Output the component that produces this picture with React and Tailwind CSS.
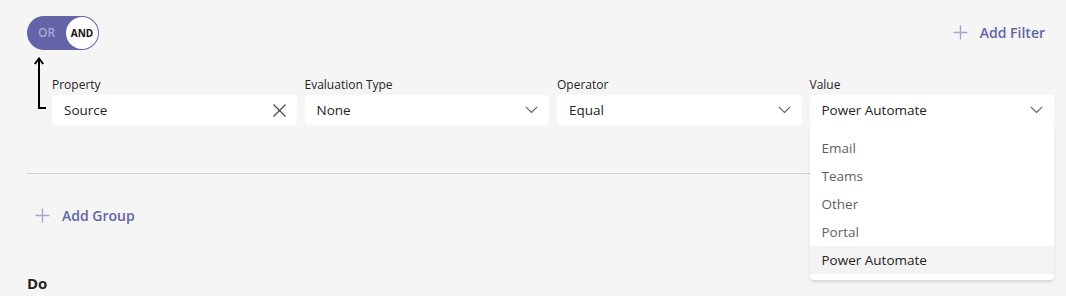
import { useState } from 'react';

const font = { fontFamily: '"Segoe UI", "Open Sans", "Noto Sans", sans-serif' };

function Chevron() {
  return (
    <svg width="13" height="8" viewBox="0 0 13 8" fill="none" className="text-[#605e5c]">
      <path d="M0.8 0.8 L6.5 6.5 L12.2 0.8" stroke="currentColor" strokeWidth="1.1" />
    </svg>
  );
}

function Plus() {
  return (
    <svg width="15" height="15" viewBox="0 0 15 15" fill="none">
      <path d="M7.5 0.5 V14.5 M0.5 7.5 H14.5" stroke="#a3a4cf" strokeWidth="1.4" />
    </svg>
  );
}

function Field({ label, value, icon, children }) {
  return (
    <div className="flex-1 relative">
      <div className="text-[12px] leading-[16px] text-[#252423] mb-[2px]">{label}</div>
      <div className="h-[30px] bg-white rounded-[4px] flex items-center justify-between pl-3 pr-[11px] text-[13.5px] text-[#252423]">
        <span>{value}</span>
        {icon}
      </div>
      {children}
    </div>
  );
}

export default function App() {
  const [options] = useState(['Email', 'Teams', 'Other', 'Portal', 'Power Automate']);

  return (
    <main className="w-[1066px] h-[296px] bg-[#f5f5f5] overflow-hidden relative" style={font}>
      {/* Toggle + add filter */}
      <div className="flex items-start justify-between pl-[27px] pr-[21px] pt-4">
        <div className="w-[72px] h-[34px] rounded-full bg-[#6264a7] flex items-center justify-between pl-[11px] pr-[1px]">
          <span className="text-[12px] font-semibold text-[#a7a8d6]">OR</span>
          <span className="w-[32px] h-[32px] rounded-full bg-white flex items-center justify-center text-[10px] font-bold text-[#111]">
            AND
          </span>
        </div>
        <button className="flex items-center gap-3 mt-[6px] text-[14px] font-semibold text-[#6264a7]">
          <Plus />
          Add Filter
        </button>
      </div>

      {/* Filter row */}
      <div className="flex items-start pl-[34px] pr-[12px] mt-[6px]">
        <svg width="18" height="54" viewBox="0 0 18 54" fill="none" className="shrink-0 mt-[1px]">
          <path d="M5 2 V51 H12" stroke="#000" strokeWidth="2" />
          <path d="M0.8 7 L5 1.5 L9.2 7" stroke="#000" strokeWidth="2" />
        </svg>
        <div className="flex gap-2 flex-1 mt-[21px]">
          <Field
            label="Property"
            value="Source"
            icon={
              <svg width="13" height="13" viewBox="0 0 13 13" fill="none">
                <path d="M0.5 0.5 L12.5 12.5 M12.5 0.5 L0.5 12.5" stroke="#444" strokeWidth="1.1" />
              </svg>
            }
          />
          <Field label="Evaluation Type" value="None" icon={<Chevron />} />
          <Field label="Operator" value="Equal" icon={<Chevron />} />
          <Field label="Value" value="Power Automate" icon={<Chevron />}>
            <div className="absolute left-0 right-0 top-[48px] bg-white rounded-b-[4px] shadow-[0_2px_3px_rgba(0,0,0,0.12)] pt-[9px] pb-[6px] z-10">
              {options.map((o) => (
                <div
                  key={o}
                  className={
                    o === 'Power Automate'
                      ? 'h-[28px] flex items-center px-3 text-[13.5px] text-[#252423] bg-[#f3f3f3]'
                      : 'h-[28px] flex items-center px-3 text-[13.5px] text-[#616161]'
                  }
                >
                  {o}
                </div>
              ))}
            </div>
          </Field>
        </div>
      </div>

      {/* Divider */}
      <div className="ml-[27px] mr-[12px] mt-[48px] border-t border-[#d1d1d1]" />

      <button className="flex items-center gap-3 ml-[35px] mt-[31px] text-[14px] font-semibold text-[#6264a7]">
        <Plus />
        Add Group
      </button>

      <div className="ml-[27px] mt-[46px] text-[15px] font-bold text-[#252423]">Do</div>
    </main>
  );
}
